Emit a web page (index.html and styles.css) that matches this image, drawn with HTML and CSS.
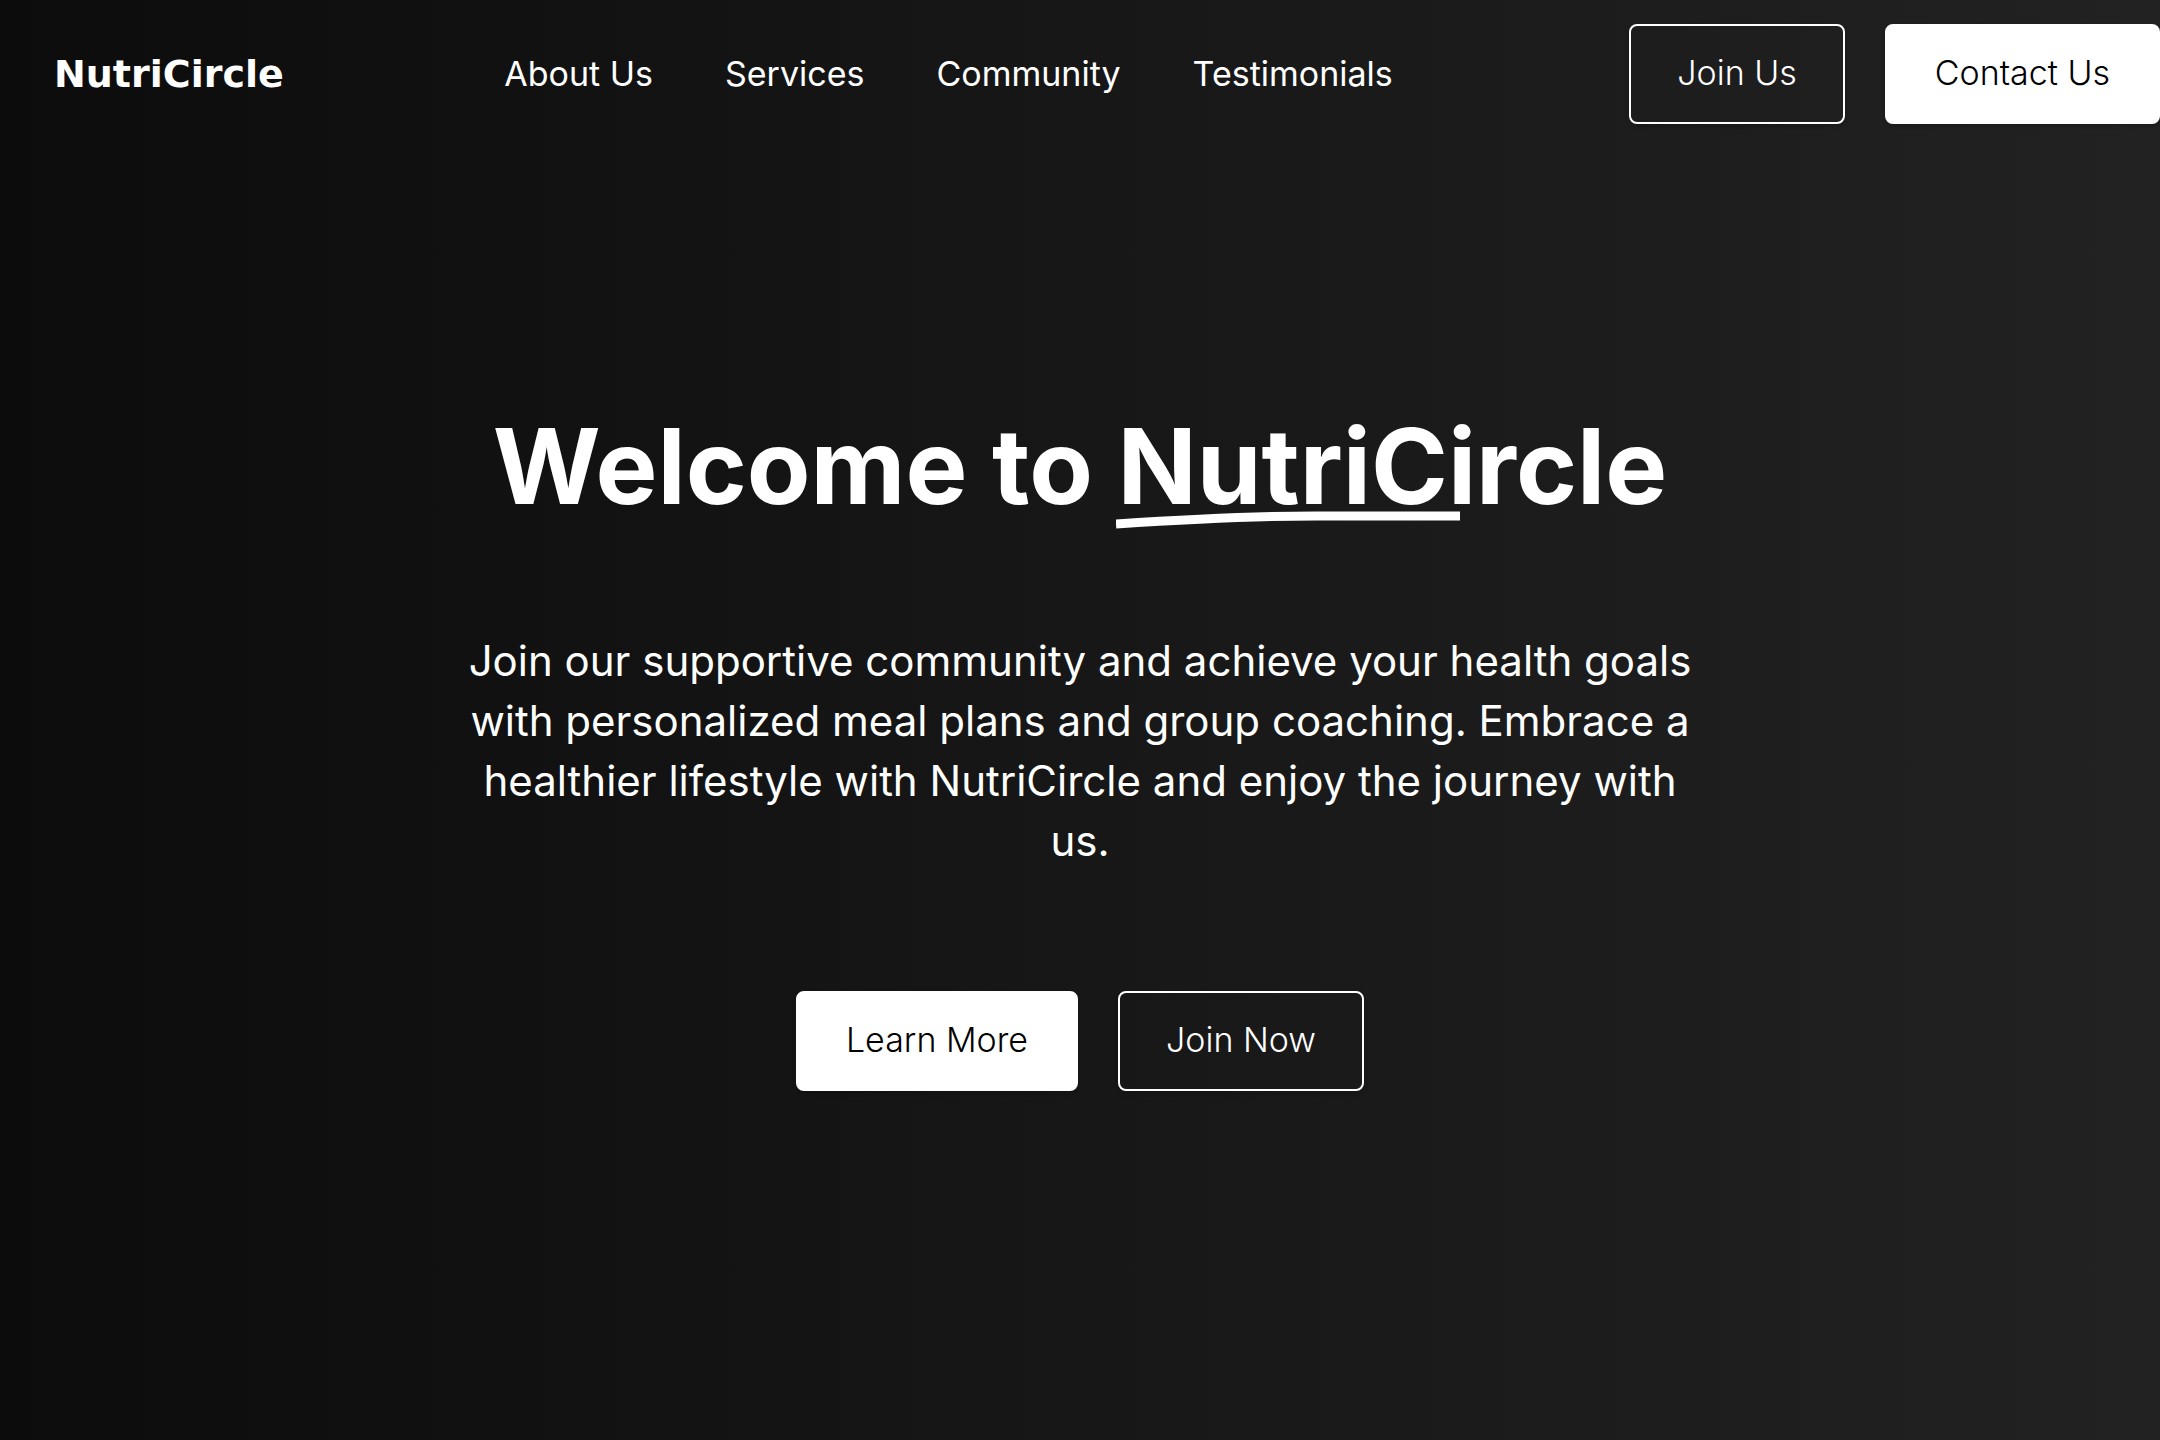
FILE: index.html
```html
<!DOCTYPE html>
<html lang="en">
<head>
<meta charset="utf-8">
<meta name="viewport" content="width=device-width, initial-scale=1">
<title>NutriCircle</title>
<link rel="stylesheet" href="styles.css">
</head>
<body>
<header class="header">
  <a class="logo" href="#home">NutriCircle</a>
  <nav class="nav">
    <a href="#about">About Us</a>
    <a href="#services">Services</a>
    <a href="#community">Community</a>
    <a href="#testimonials">Testimonials</a>
  </nav>
  <div class="actions">
    <button class="btn btn-outline" type="button">Join Us</button>
    <button class="btn btn-solid" type="button">Contact Us</button>
  </div>
</header>
<main class="hero" id="home">
  <h1 class="title">Welcome to <span class="mark">NutriCircle<svg class="stroke" viewBox="0 0 344 20" aria-hidden="true"><path d="M0 13 Q120 5 200 5 L344 5" fill="none" stroke="#fff" stroke-width="9"/></svg></span></h1>
  <p class="lead">Join our supportive community and achieve your health goals with personalized meal plans and group coaching. Embrace a healthier lifestyle with NutriCircle and enjoy the journey with us.</p>
  <div class="actions">
    <button class="btn btn-solid" type="button">Learn More</button>
    <button class="btn btn-outline" type="button">Join Now</button>
  </div>
</main>
</body>
</html>
```
FILE: styles.css
```css
* {
  box-sizing: border-box;
}

body {
  margin: 0;
  min-height: 100vh;
  display: flex;
  flex-direction: column;
  background: linear-gradient(to right, #0c0c0c, #222222);
  color: #fff;
  font-family: Inter, "Open Sans", sans-serif;
}

a {
  color: inherit;
  text-decoration: none;
}

.header {
  display: flex;
  align-items: center;
  justify-content: space-between;
  padding: 24px 0 24px 54px;
}

.logo {
  font: bold 38px/48px "DejaVu Sans", sans-serif;
}

.nav {
  display: flex;
  gap: 72px;
  margin-right: 16px;
  font-size: 34px;
  line-height: 48px;
}

.actions {
  display: flex;
  gap: 40px;
}

.btn {
  height: 100px;
  padding: 0 48px 2px;
  border: 2px solid #fff;
  border-radius: 8px;
  font: 300 34px/48px Inter, "Open Sans", sans-serif;
  box-shadow: 0 2px 4px rgba(0, 0, 0, 0.2);
}

.btn-outline {
  padding: 0 46px 2px;
  background: transparent;
  color: #fff;
}

.btn-solid {
  background: #fff;
  color: #000;
}

.hero {
  flex: 1;
  display: flex;
  flex-direction: column;
  align-items: center;
  padding: 258px 40px 40px;
}

.title {
  margin: 0;
  font-size: 104px;
  font-weight: 700;
  line-height: 120px;
}

.mark {
  position: relative;
}

.stroke {
  position: absolute;
  left: -2px;
  bottom: -2px;
  width: 344px;
  height: 20px;
}

.lead {
  max-width: 1260px;
  margin: 105px 0 120px;
  font-size: 42px;
  line-height: 60px;
  text-align: center;
}
```
